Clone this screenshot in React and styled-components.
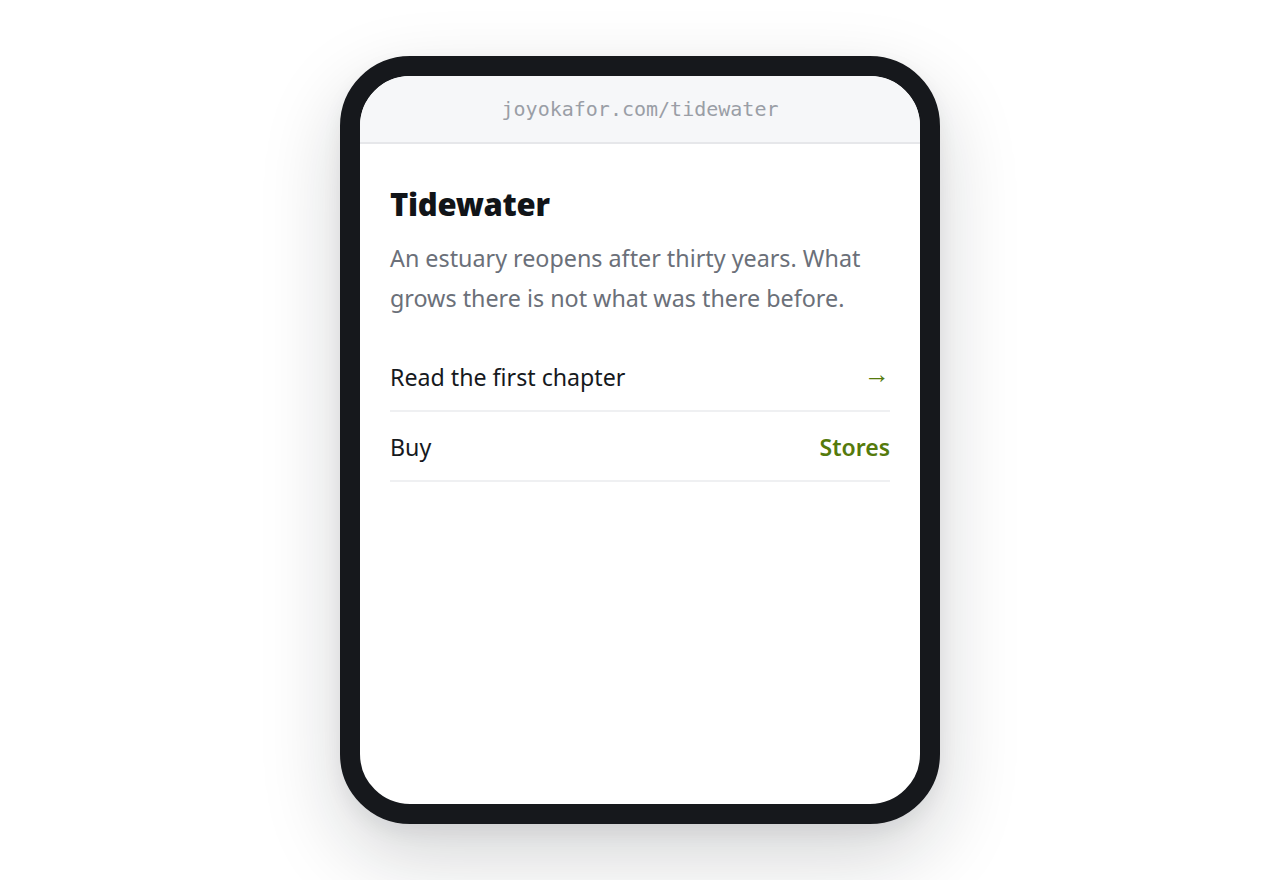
import React from "react";
import styled, { createGlobalStyle } from "styled-components";

const Global = createGlobalStyle`
  html, body { margin: 0; padding: 0; background: #ffffff; }
  body { font-family: "Noto Sans", "Open Sans", sans-serif; }
  * { box-sizing: border-box; }
`;

const Page = styled.div`
  min-height: 880px;
  display: flex;
  align-items: flex-start;
  justify-content: center;
  padding-top: 56px;
`;

const Device = styled.div`
  width: 600px;
  height: 768px;
  border: 20px solid #16181c;
  border-radius: 70px;
  background: #ffffff;
  overflow: hidden;
  box-shadow: 0 32px 80px rgba(17, 20, 28, 0.18), 0 8px 20px rgba(17, 20, 28, 0.06);
  display: flex;
  flex-direction: column;
`;

const UrlBar = styled.div`
  height: 68px;
  flex: none;
  background: #f6f7f9;
  border-bottom: 2px solid #e6e7ea;
  display: flex;
  align-items: center;
  justify-content: center;
  font-family: "DejaVu Sans Mono", "Liberation Mono", monospace;
  font-size: 20px;
  color: #9a9ea6;
`;

const Content = styled.div`
  padding: 42px 30px 30px;
  display: flex;
  flex-direction: column;
`;

const Title = styled.h1`
  margin: 0;
  font-size: 31px;
  line-height: 36px;
  font-weight: 900;
  letter-spacing: -0.3px;
  color: #111418;
`;

const Lede = styled.p`
  margin: 16px 0 24px;
  font-size: 23.3px;
  line-height: 40px;
  color: #6b7079;
`;

const List = styled.div`
  display: flex;
  flex-direction: column;
`;

const Row = styled.div`
  display: flex;
  align-items: center;
  justify-content: space-between;
  height: 70px;
  padding-top: 2px;
  border-bottom: 2px solid #eff0f2;
  font-size: 23.2px;
  color: #16191d;
`;

const Action = styled.span`
  color: #557a0c;
  font-weight: ${(p) => (p.$strong ? 600 : 400)};
  font-size: ${(p) => (p.$strong ? "23px" : "26px")};
  line-height: 1;
  padding-bottom: ${(p) => (p.$strong ? "0" : "9px")};
`;

export default function App() {
  return (
    <>
      <Global />
      <Page>
        <Device>
          <UrlBar>joyokafor.com/tidewater</UrlBar>
          <Content>
            <Title>Tidewater</Title>
            <Lede>
              An estuary reopens after thirty years. What grows there is not what was there before.
            </Lede>
            <List>
              <Row>
                <span>Read the first chapter</span>
                <Action>→</Action>
              </Row>
              <Row>
                <span>Buy</span>
                <Action $strong>Stores</Action>
              </Row>
            </List>
          </Content>
        </Device>
      </Page>
    </>
  );
}
